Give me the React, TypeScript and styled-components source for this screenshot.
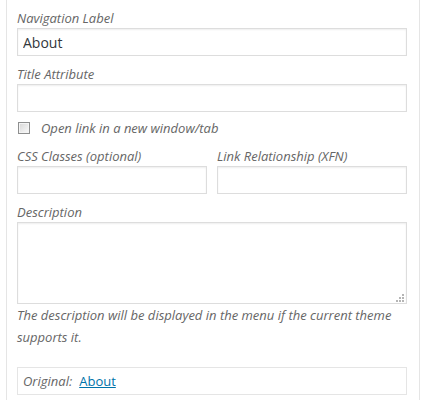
import React, { useState } from "react";
import styled, { createGlobalStyle } from "styled-components";

const GlobalStyle = createGlobalStyle`
  body {
    margin: 0;
    background: #ffffff;
    font-family: "Open Sans", "Noto Sans", sans-serif;
    font-size: 13px;
    color: #444;
  }
`;

const Page = styled.div`
  padding: 0 6px;
`;

const Panel = styled.div`
  box-sizing: border-box;
  width: 414px;
  border-left: 1px solid #e5e5e5;
  border-right: 1px solid #e5e5e5;
  padding: 8px 12px 12px 10px;
  display: flex;
  flex-direction: column;
`;

const Field = styled.label<{ $gapAfter?: number }>`
  display: flex;
  flex-direction: column;
  margin-bottom: ${(p) => p.$gapAfter ?? 8}px;
  flex: 1;
`;

const LabelText = styled.span`
  font-style: italic;
  color: #666;
  font-size: 13px;
  line-height: 20px;
`;

const TextInput = styled.input`
  box-sizing: border-box;
  height: 28px;
  width: 100%;
  margin: 0;
  padding: 3px 5px;
  border: 1px solid #ddd;
  border-radius: 0;
  box-shadow: inset 0 1px 2px rgba(0, 0, 0, 0.07);
  background: #fff;
  font-family: "Open Sans", "Noto Sans", sans-serif;
  font-size: 14px;
  color: #32373c;
  outline: none;
`;

const AreaWrap = styled.div`
  position: relative;
  height: 82px;
`;

const TextArea = styled.textarea`
  box-sizing: border-box;
  display: block;
  width: 100%;
  height: 82px;
  margin: 0;
  padding: 2px 6px;
  border: 1px solid #ddd;
  border-radius: 0;
  box-shadow: inset 0 1px 2px rgba(0, 0, 0, 0.07);
  font-family: "Open Sans", "Noto Sans", sans-serif;
  font-size: 14px;
  color: #32373c;
  resize: none;
  outline: none;
`;

const Grip = styled.svg`
  position: absolute;
  right: 3px;
  bottom: 2px;
`;

const CheckRow = styled.label`
  display: flex;
  align-items: center;
  height: 20px;
  margin: -2px 0 8px;
  cursor: pointer;
`;

const CheckBox = styled.span<{ $checked: boolean }>`
  box-sizing: border-box;
  width: 12px;
  height: 12px;
  margin: -1px 11px 0 1px;
  border: 1px solid #8e8f8f;
  background: linear-gradient(135deg, #d6d6d6 0%, #ececec 60%, #fafafa 100%);
  box-shadow: inset 0 0 0 1px #f4f4f4;
  position: relative;
  &::after {
    content: "${(p) => (p.$checked ? "✓" : "")}";
    position: absolute;
    left: 0;
    top: -4px;
    font-size: 11px;
    color: #333;
  }
`;

const Row = styled.div`
  display: flex;
  gap: 10px;
`;

const Help = styled.p`
  margin: 0;
  font-style: italic;
  color: #666;
  font-size: 13px;
  line-height: 22px;
`;

const Original = styled.p`
  box-sizing: border-box;
  margin: 19px 0 0;
  height: 28px;
  padding: 0 5px;
  border: 1px solid #e5e5e5;
  display: flex;
  align-items: center;
  font-style: italic;
  color: #666;
  font-size: 13px;
`;

const OriginalLink = styled.a`
  margin-left: 7px;
  font-style: normal;
  color: #0073aa;
  text-decoration: underline;
`;

const gripDots = [
  [6, 0],
  [3, 3],
  [6, 3],
  [0, 6],
  [3, 6],
  [6, 6],
];

export default function App() {
  const [label, setLabel] = useState("About");
  const [newTab, setNewTab] = useState(false);

  return (
    <Page>
      <GlobalStyle />
      <Panel>
        <Field>
          <LabelText>Navigation Label</LabelText>
          <TextInput value={label} onChange={(e) => setLabel(e.target.value)} />
        </Field>
        <Field>
          <LabelText>Title Attribute</LabelText>
          <TextInput />
        </Field>
        <CheckRow onClick={() => setNewTab(!newTab)}>
          <CheckBox $checked={newTab} />
          <LabelText>Open link in a new window/tab</LabelText>
        </CheckRow>
        <Row>
          <Field>
            <LabelText>CSS Classes (optional)</LabelText>
            <TextInput />
          </Field>
          <Field>
            <LabelText>Link Relationship (XFN)</LabelText>
            <TextInput />
          </Field>
        </Row>
        <Field $gapAfter={0}>
          <LabelText>Description</LabelText>
          <AreaWrap>
            <TextArea />
            <Grip width="8" height="8" viewBox="0 0 8 8">
              {gripDots.map(([x, y]) => (
                <rect key={`${x}-${y}`} x={x} y={y} width="2" height="2" fill="#b5b5b5" />
              ))}
            </Grip>
          </AreaWrap>
        </Field>
        <Help>The description will be displayed in the menu if the current theme supports it.</Help>
        <Original>
          Original:
          <OriginalLink href="#">About</OriginalLink>
        </Original>
      </Panel>
    </Page>
  );
}
